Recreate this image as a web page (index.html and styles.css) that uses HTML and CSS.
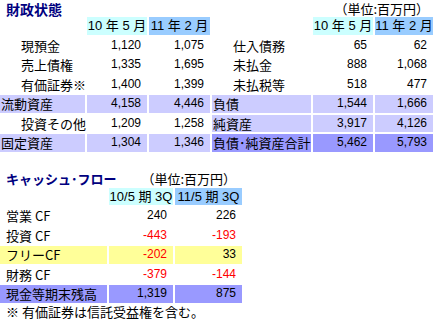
FILE: index.html
```html
<!DOCTYPE html>
<html lang="ja">
<head>
<meta charset="utf-8">
<title>財政状態</title>
<link rel="stylesheet" href="styles.css">
</head>
<body>
<div class="page">
  <div class="head">
    <div class="title">財政状態</div>
    <div class="unit">（単位:百万円）</div>
  </div>
  <div class="bs">
    <div class="c"></div><div class="c h1">10 年 5 月</div><div class="c h2">11 年 2 月</div>
    <div class="c"></div><div class="c h1">10 年 5 月</div><div class="c h2">11 年 2 月</div>

    <div class="c lab ind">現預金</div><div class="c num">1,120</div><div class="c num">1,075</div>
    <div class="c lab ind">仕入債務</div><div class="c num">65</div><div class="c num">62</div>

    <div class="c lab ind">売上債権</div><div class="c num">1,335</div><div class="c num">1,695</div>
    <div class="c lab ind">未払金</div><div class="c num">888</div><div class="c num">1,068</div>

    <div class="c lab ind">有価証券※</div><div class="c num">1,400</div><div class="c num">1,399</div>
    <div class="c lab ind">未払税等</div><div class="c num">518</div><div class="c num">477</div>

    <div class="c lab lv">流動資産</div><div class="c num lv">4,158</div><div class="c num lv">4,446</div>
    <div class="c lab lv">負債</div><div class="c num lv">1,544</div><div class="c num lv">1,666</div>

    <div class="c lab ind">投資その他</div><div class="c num">1,209</div><div class="c num">1,258</div>
    <div class="c lab lv">純資産</div><div class="c num lv">3,917</div><div class="c num lv">4,126</div>

    <div class="c lab lv">固定資産</div><div class="c num lv">1,304</div><div class="c num lv">1,346</div>
    <div class="c lab dk">負債･純資産合計</div><div class="c num dk">5,462</div><div class="c num dk">5,793</div>
  </div>

  <div class="head cfhead">
    <div class="title cftitle">キャッシュ･フロー</div>
    <div class="unit">（単位:百万円）</div>
  </div>
  <div class="cf">
    <div class="c"></div><div class="c h1">10/5 期 3Q</div><div class="c h2">11/5 期 3Q</div>

    <div class="c lab cl">営業 CF</div><div class="c num">240</div><div class="c num">226</div>
    <div class="c lab cl">投資 CF</div><div class="c num neg">-443</div><div class="c num neg">-193</div>
    <div class="c lab cl yl">フリーCF</div><div class="c num neg yl">-202</div><div class="c num yl">33</div>
    <div class="c lab cl">財務 CF</div><div class="c num neg">-379</div><div class="c num neg">-144</div>
    <div class="c lab cl dk">現金等期末残高</div><div class="c num dk">1,319</div><div class="c num dk">875</div>
  </div>
  <div class="note">※ 有価証券は信託受益権を含む。</div>
</div>
</body>
</html>
```
FILE: styles.css
```css
html, body {
  margin: 0;
  padding: 0;
  background: #ffffff;
}
body {
  font-family: "Noto Sans CJK JP", "Liberation Sans", sans-serif;
  font-size: 13px;
  color: #000000;
}
.page {
  width: 435px;
}
.head {
  display: flex;
  justify-content: space-between;
  align-items: center;
  height: 17px;
}
.title {
  padding-left: 6px;
  font-size: 14px;
  font-weight: bold;
  color: #000080;
  line-height: 16px;
}
.unit {
  padding-right: 6px;
  font-size: 13px;
  line-height: 16px;
}
.bs {
  display: grid;
  grid-template-columns: 85px 60px 61px 99px 60px 58px;
  grid-auto-rows: 17.5px;
  column-gap: 2px;
  row-gap: 2px;
}
.c {
  line-height: 17.5px;
  white-space: nowrap;
}
.h1 {
  background: #ccffff;
  text-align: center;
  font-family: "Liberation Sans", "Noto Sans CJK JP", sans-serif;
  font-size: 13px;
}
.h2 {
  background: #99ccff;
  text-align: center;
  font-family: "Liberation Sans", "Noto Sans CJK JP", sans-serif;
  font-size: 13px;
}
.lab {
  padding-left: 1px;
}
.ind {
  padding-left: 21px;
}
.num {
  text-align: right;
  padding-right: 6px;
  font-family: "Liberation Sans", sans-serif;
  font-size: 12px;
}
.lv {
  background: #ccccff;
}
.dk {
  background: #9999ff;
}
.yl {
  background: #ffff99;
}
.neg {
  color: #ff0000;
}
.cfhead {
  width: 242px;
  margin-top: 19px;
}
.cftitle {
  font-size: 13px;
}
.cf {
  display: grid;
  grid-template-columns: 107px 64px 67px;
  grid-auto-rows: 17.5px;
  column-gap: 2px;
  row-gap: 2px;
  width: 242px;
}
.cl {
  padding-left: 6px;
}
.note {
  padding-left: 6px;
  padding-top: 2px;
  line-height: 14px;
  font-size: 13px;
}
```
